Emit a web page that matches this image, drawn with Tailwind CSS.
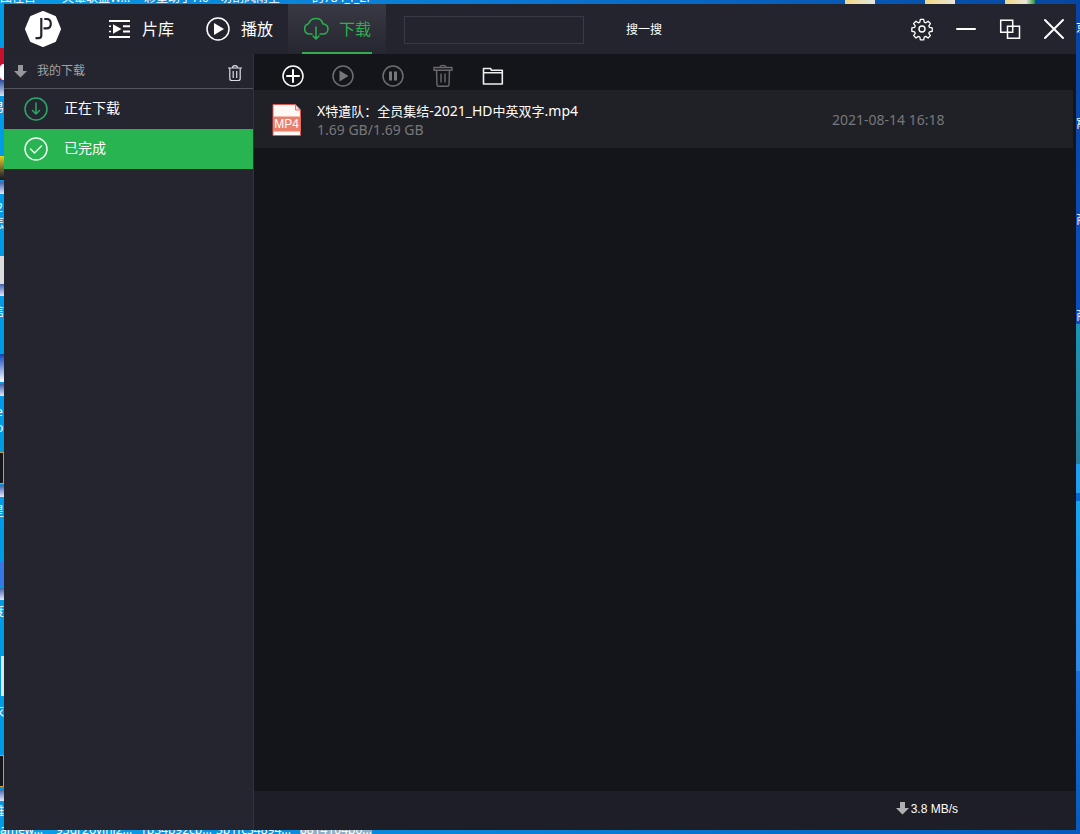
<!DOCTYPE html>
<html lang="zh-CN">
<head>
<meta charset="utf-8">
<meta name="viewport" content="width=device-width, initial-scale=1">
<title>下载</title>
<script src="https://cdn.jsdelivr.net/npm/@tailwindcss/browser@4"></script>
</head>
<body class="relative h-screen overflow-hidden bg-[#009be6] p-1 font-['Noto_Sans','Noto_Sans_CJK_SC',sans-serif] text-white">

<!-- Desktop behind the window -->
<div aria-hidden="true" class="absolute inset-0 overflow-hidden text-xs leading-4 whitespace-nowrap">
  <div class="absolute inset-x-0 top-0 h-1 bg-linear-to-r from-[#0a9ae4] via-[#0b74d0] to-[#0646a0]"></div>
  <div class="absolute inset-x-0 bottom-0 h-1 bg-linear-to-r from-[#0a9ee6] via-[#0a80d8] to-[#0659bd]"></div>
  <div class="absolute inset-y-0 right-0 flex w-1 flex-col">
    <div class="h-[324px] bg-linear-to-b from-[#0645a3] to-[#0a4fc0]"></div>
    <div class="h-[140px] bg-linear-to-b from-[#1c93b5] to-[#267f9c]"></div>
    <div class="h-[29px] bg-[#239df2]"></div>
    <div class="h-2 bg-[#0a62d6]"></div>
    <div class="h-[170px] bg-linear-to-b from-[#16a5f2] to-[#2f87ea]"></div>
    <div class="flex-1 bg-linear-to-b from-[#1a6fda] to-[#0659bd]"></div>
  </div>

  <span class="absolute -top-2.5 left-0">图怪兽</span>
  <span class="absolute -top-2.5 left-[62px]">英雄联盟W...</span>
  <span class="absolute -top-2.5 left-36">彩墨助手7.0</span>
  <span class="absolute -top-2.5 left-55">切割风雨全</span>
  <span class="absolute -top-2.5 left-78">的784_f_2f</span>
  <div class="absolute top-0 left-[845px] h-1 w-[30px] bg-linear-to-r from-[#f3d67e] to-[#e3e6e6]"></div>
  <div class="absolute top-0 left-[925px] h-1 w-[30px] bg-linear-to-r from-[#f3d67e] to-[#e9e6da]"></div>
  <div class="absolute top-0 left-[1005px] h-1 w-[30px] bg-linear-to-r from-[#f3d67e] via-[#e9e6da] via-70% to-[#109040]"></div>

  <span class="absolute -bottom-1 left-0">amew...</span>
  <span class="absolute -bottom-1 left-14">93dr2ovini2...</span>
  <span class="absolute -bottom-1 left-35">1b34b92cb...</span>
  <span class="absolute -bottom-1 left-54">3b1fc34894...</span>
  <span class="absolute -bottom-1 left-75 bg-[#8fb0c4]">0814104b0...</span>

  <div class="absolute top-12 left-0 h-8 w-1 bg-[#c8102e]"></div>
  <div class="absolute top-16 left-0 h-4 w-1 rounded-l-full bg-white"></div>
  <div class="absolute top-20 left-0 h-4 w-1 bg-linear-to-b from-[#2b4f9e] to-[#dfe3f5]"></div>
  <div class="absolute top-39 left-0 h-6 w-1 bg-linear-to-b from-[#f0d000] to-[#15151a]"></div>
  <div class="absolute top-[182px] left-0 h-3 w-1 bg-linear-to-b from-[#3f63ae] to-[#e8e8fa]"></div>
  <div class="absolute top-64 left-0 h-7 w-1 bg-[#dcdcdc]"></div>
  <div class="absolute top-[284px] left-0 h-3 w-1 bg-linear-to-b from-[#3f63ae] to-[#e8e8fa]"></div>
  <div class="absolute top-[354px] left-0 h-7 w-1 bg-linear-to-b from-[#0b3fb8] to-white"></div>
  <div class="absolute top-[384px] left-0 h-3 w-1 bg-linear-to-b from-[#3f63ae] to-[#e8e8fa]"></div>
  <div class="absolute top-[452px] left-0 h-8 w-1 border-y border-r border-[#c9a13c] bg-[#15151a]"></div>
  <div class="absolute top-[485px] left-0 h-3 w-1 bg-linear-to-b from-[#3f63ae] to-[#e8e8fa]"></div>
  <div class="absolute top-[562px] left-0 h-6 w-1 bg-[#3577e6]"></div>
  <div class="absolute top-[588px] left-0 h-3 w-1 bg-linear-to-b from-[#3f63ae] to-[#e8e8fa]"></div>
  <div class="absolute top-[656px] left-px h-10 w-1 bg-[#e4e4e0]"></div>
  <div class="absolute top-[755px] left-0 h-8 w-1 border-y border-r border-[#c9a13c] bg-[#15151a]"></div>
  <div class="absolute top-[789px] left-0 h-3 w-1 bg-linear-to-b from-[#3f63ae] to-[#e8e8fa]"></div>
  <span class="absolute top-25 -left-2">易</span>
  <span class="absolute top-50 -left-1">2</span>
  <span class="absolute top-54 -left-2">怎</span>
  <span class="absolute top-76 -left-2">信</span>
  <span class="absolute top-101 -left-1">e</span>
  <span class="absolute top-105 -left-1">o</span>
  <span class="absolute top-126 -left-2">星</span>
  <span class="absolute top-151 -left-2">度</span>
  <span class="absolute top-176 -left-2">衣</span>
  <span class="absolute top-201 -left-2">雕</span>
  <span class="absolute top-5 left-[1076px]">京</span>
  <span class="absolute top-29 left-[1076px]">寓</span>
  <span class="absolute top-53 left-[1076px]">商</span>
  <span class="absolute top-77 left-[1076px]">商</span>
</div>

<!-- Application window -->
<div class="relative flex h-full flex-col bg-[#14151a]">
  <header class="flex h-[50px] shrink-0 items-stretch bg-[#24242e]">
    <div class="flex w-22 shrink-0 items-center pl-5">
      <svg class="size-[38px]" viewBox="0 0 38 38" role="img" aria-label="JP">
        <path fill="#fff" stroke="#fff" stroke-width="2" stroke-linejoin="round" d="M19 2 31 7 36 19 31 31 19 36 7 31 2 19 7 7Z"/>
        <path fill="none" stroke="#24242e" stroke-width="2.200" d="M17.300 8v17.500c0 2-1 2.700-2.800 2.700H11.500"/>
        <path fill="none" stroke="#24242e" stroke-width="2.200" d="M20.300 9h2.200c3 0 4.300 1.800 4.300 4.700s-1.300 4.700-4.300 4.700H19.500"/>
      </svg>
    </div>
    <nav class="flex shrink-0 text-base">
      <a href="#" class="flex w-[98px] items-center gap-[10px] pl-4">
        <svg class="h-5 w-6 shrink-0" viewBox="0 0 24 20" fill="none" stroke="#fff" stroke-width="2">
          <path d="M1 2h21M15 7.300h7M15 12.500h7M1 18h21"/><path d="M1 7.300h2M1 12.500h2" stroke-width="1.500"/><path d="M5 5.200v9.600l8.500-4.800z" fill="#fff" stroke="none"/>
        </svg>
        <span>片库</span>
      </a>
      <a href="#" class="flex w-[98px] items-center gap-[10px] pl-[15px]">
        <svg class="size-[26px] shrink-0" viewBox="0 0 26 26" fill="none"><circle cx="13" cy="13" r="11" stroke="#fff" stroke-width="1.500"/><path d="M9 7v12l10-6z" fill="#fff"/></svg>
        <span>播放</span>
      </a>
      <a href="#" aria-current="page" class="flex w-[98px] justify-center bg-linear-to-b from-[#393944] to-[#262630] text-[#2bb04e]">
        <span class="flex w-[70px] items-center gap-[10px] border-b-2 border-[#35ac50] pt-0.5 pl-px">
          <svg class="size-[26px] shrink-0" viewBox="0 0 26 26" fill="none" stroke="#2bb04e" stroke-width="1.500" stroke-linecap="round" stroke-linejoin="round"><path d="M9 18H6.500a5.200 5.200 0 0 1-1-10.200C6.500 5 8.500 2.500 13 2.500c3.800 0 6.200 2.300 6.800 5.300 3.200.5 5.200 2.500 5.200 5.200 0 3-2.200 5-5 5H17M13 11v11.500M10 20l3 3 3-3"/></svg>
          <span class="whitespace-nowrap">下载</span>
        </span>
      </a>
    </nav>
    <form class="flex flex-1 items-center pt-0.5 pl-[18px]">
      <input type="text" aria-label="搜索" class="h-7 w-[180px] border border-[#3a3a46] bg-transparent px-2 text-xs outline-none">
      <button type="button" class="ml-[42px] text-xs leading-4 whitespace-nowrap">搜一搜</button>
    </form>
    <div class="flex shrink-0 items-center gap-5 pr-[10px]">
      <button type="button" aria-label="设置"><svg class="size-6" viewBox="0 0 24 24" fill="none" stroke="#fff" stroke-width="1.400" stroke-linejoin="round"><circle cx="12" cy="12" r="3"/><path d="M10.200 1.500h3.600l.6 3 1.700.7 2.500-1.700 2.500 2.500-1.700 2.500.7 1.700 3 .6v3.600l-3 .6-.7 1.700 1.700 2.500-2.500 2.500-2.500-1.700-1.700.7-.6 3h-3.600l-.6-3-1.700-.7-2.500 1.700-2.500-2.500 1.700-2.500-.7-1.700-3-.6v-3.600l3-.6.7-1.700L2.900 6l2.500-2.500 2.500 1.700 1.700-.7z" transform="translate(1 1) scale(.92)"/></svg></button>
      <button type="button" aria-label="最小化"><svg class="size-6" viewBox="0 0 24 24"><path d="M3 12h18" stroke="#fff" stroke-width="2" stroke-linecap="round"/></svg></button>
      <button type="button" aria-label="还原"><svg class="size-6" viewBox="0 0 24 24" fill="none" stroke="#fff" stroke-width="1.500"><path d="M2.700 3.200h12v12h-12zM9.500 9.200h12v12h-12z"/></svg></button>
      <button type="button" aria-label="关闭"><svg class="size-6" viewBox="0 0 24 24"><path d="M3 3l18 18M21 3 3 21" stroke="#fff" stroke-width="2" stroke-linecap="round"/></svg></button>
    </div>
  </header>

  <div class="flex min-h-0 flex-1">
    <aside class="w-[250px] shrink-0 border-r border-[#33333b] bg-[#24252e]">
      <div class="flex h-[35px] items-center border-b border-[#53535b] pr-[10px] pl-[10px]">
        <svg class="size-[13px]" viewBox="0 0 13 13"><path d="M4 0h5v6h4l-6.500 6.500L0 6h4z" fill="#97979b"/></svg>
        <h2 class="ml-[10px] flex-1 text-xs leading-4 text-[#a3a3a7]">我的下载</h2>
        <button type="button" aria-label="清空" class="pt-1"><svg class="h-[18px] w-4" viewBox="0 0 16 18" fill="none" stroke="#dcdce0" stroke-width="1.200"><path d="M1 4h14M5.500 4c0-3.300 5-3.300 5 0M2.800 4v10.500c0 1.500.7 2 2 2h6.400c1.300 0 2-.5 2-2V4M6.200 7v7M9.700 7v7"/></svg></button>
      </div>
      <nav class="text-sm">
        <a href="#" class="flex h-10 items-center gap-4 pl-5">
          <svg class="size-6" viewBox="0 0 24 24" fill="none" stroke="#2ba86a" stroke-width="1.500" stroke-linecap="round" stroke-linejoin="round"><circle cx="12" cy="12" r="11"/><path d="M12 6v11M8.500 13.500 12 17l3.500-3.500"/></svg>
          <span class="pb-0.5">正在下载</span>
        </a>
        <a href="#" aria-current="page" class="flex h-10 items-center gap-4 bg-[#28b450] pl-5">
          <svg class="size-6" viewBox="0 0 24 24" fill="none" stroke="#e9fbef" stroke-width="1.500" stroke-linecap="round" stroke-linejoin="round"><circle cx="12" cy="12" r="11"/><path d="m6.500 12 4 4 7-7"/></svg>
          <span class="pb-0.5">已完成</span>
        </a>
      </nav>
    </aside>

    <main class="flex min-w-0 flex-1 flex-col">
      <div class="flex h-9 shrink-0 items-center gap-[26px] pt-2 pl-[27px]">
        <button type="button" aria-label="新建"><svg class="size-6" viewBox="0 0 24 24" fill="none" stroke="#fff" stroke-linecap="round"><circle cx="12" cy="12" r="10" stroke-width="1.500"/><path d="M6 12h12M12 6v12" stroke-width="2"/></svg></button>
        <button type="button" aria-label="开始"><svg class="size-6" viewBox="0 0 24 24" fill="none"><circle cx="12" cy="12" r="10" stroke="#6e6e72" stroke-width="1.500"/><path d="M8.500 6.500v11l9-5.500z" fill="#77777b"/></svg></button>
        <button type="button" aria-label="暂停"><svg class="size-6" viewBox="0 0 24 24" fill="none"><circle cx="12" cy="12" r="10" stroke="#6e6e72" stroke-width="1.500"/><path d="M8 7.500h3v9H8zM13 7.500h3v9h-3z" fill="#77777b"/></svg></button>
        <button type="button" aria-label="删除"><svg class="size-6" viewBox="0 0 24 24" fill="none" stroke="#6a6a6e" stroke-width="1.400" stroke-linejoin="round"><path d="M3 3.500h18v2.800H3zM9 3.500c0-2.800 6-2.800 6 0M5.500 6.300l.5 14.500c0 1 .5 1.500 1.500 1.500h9c1 0 1.500-.5 1.500-1.500l.5-14.500M10 9.500v9M14 9.500v9"/></svg></button>
        <button type="button" aria-label="打开文件夹"><svg class="size-6" viewBox="0 0 24 24" fill="none" stroke="#eee" stroke-width="1.600" stroke-linejoin="round"><path d="M2.500 20V4.500h7l1 1.800h10.800V20zM2.500 8.800h18.800"/></svg></button>
      </div>

      <ul class="mr-[3px] flex-1">
        <li class="flex h-[58px] items-center bg-[#202126] pt-0.5 pl-[18px]">
          <svg class="h-8 w-[30px] shrink-0" viewBox="0 0 30 32" role="img" aria-label="MP4">
            <path d="M1 .5h22.500L28.500 6v25.500H1z" fill="#fff8f4" stroke="#e4574f"/>
            <path d="M23.500.5V6h5z" fill="#fbd9d3" stroke="#d75a50" stroke-width=".8"/>
            <path d="M1 12.500h27.500v15H1z" fill="#e8806c"/>
            <text x="14.700" y="23.500" text-anchor="middle" font-size="12" font-family="Liberation Sans, sans-serif" fill="#fff">MP4</text>
          </svg>
          <div class="ml-[15px] min-w-0 flex-1">
            <p class="truncate text-sm leading-5">X<span class="text-[13px]">特遣队：全员集结</span>-2021_HD<span class="text-[13px]">中英双字</span>.mp4</p>
            <p class="text-sm leading-[18px] text-[#77777a]">1.69 GB/1.69 GB</p>
          </div>
          <time datetime="2021-08-14T16:18" class="w-[241px] shrink-0 text-sm text-[#77777a]">2021-08-14 16:18</time>
        </li>
      </ul>

      <footer class="flex h-[39px] shrink-0 items-center justify-end gap-0.5 bg-[#1e1f26] pr-[118px] pb-1 font-['Liberation_Sans',sans-serif] text-xs">
        <svg class="size-[13px]" viewBox="0 0 13 13"><path d="M4 0h5v6h4l-6.500 6.500L0 6h4z" fill="#b0b0b2"/></svg>
        <span>3.8 MB/s</span>
      </footer>
    </main>
  </div>
</div>
</body>
</html>
